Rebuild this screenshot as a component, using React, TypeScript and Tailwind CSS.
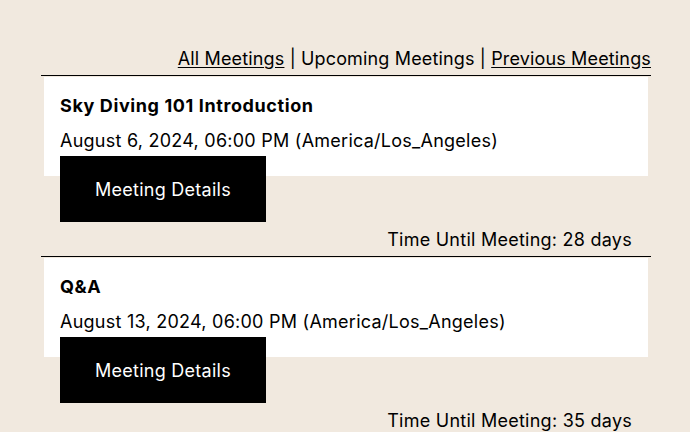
const MEETINGS = [
  {
    id: 1,
    title: 'Sky Diving 101 Introduction',
    date: 'August 6, 2024, 06:00 PM (America/Los_Angeles)',
    until: '28 days',
  },
  {
    id: 2,
    title: 'Q&A',
    date: 'August 13, 2024, 06:00 PM (America/Los_Angeles)',
    until: '35 days',
  },
]

export default function App() {
  return (
    <main
      className="min-h-screen bg-[#f1e9df] pt-[45px] text-black text-[18px] leading-[27px] tracking-[0.25px]"
      style={{ fontFamily: 'Inter, "Noto Sans", sans-serif' }}
    >
      <div className="ml-[41px] w-[610px]">
        <nav className="text-right pb-[3px] tracking-[0.15px]">
          <a href="#" className="underline underline-offset-2">
            All Meetings
          </a>{' '}
          |{' '}
          <span>Upcoming Meetings</span> |{' '}
          <a href="#" className="underline underline-offset-2">
            Previous Meetings
          </a>
        </nav>

        {MEETINGS.map((m) => (
          <section key={m.id} className="border-t border-black">
            <div className="mx-[3px] mt-px h-[99px] bg-white px-[16px] pt-[15px]">
              <h3 className="font-bold tracking-[0.6px]">{m.title}</h3>
              <p className="mt-[8px]">{m.date}</p>
              <button className="mt-[2px] flex h-[66px] w-[206px] items-center justify-center bg-black text-white">
                Meeting Details
              </button>
            </div>
            <p className="mt-[50px] mb-[3px] pr-[19px] text-right">
              Time Until Meeting: {m.until}
            </p>
          </section>
        ))}
      </div>
    </main>
  )
}
